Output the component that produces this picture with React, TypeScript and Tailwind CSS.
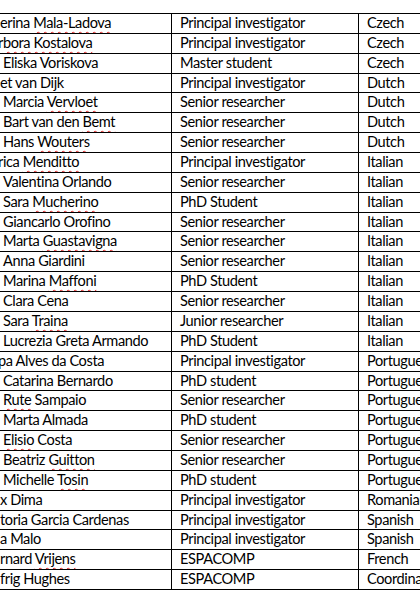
const rows: [string, string, string, string?][] = [
  ["erina |Mala-Ladova|", "Principal investigator", "Czech", "cut"],
  ["r|bora Kostalova|", "Principal investigator", "Czech", "cutr"],
  ["Eliska Voriskova", "Master student", "Czech"],
  ["et van Dijk", "Principal investigator", "Dutch", "cut"],
  ["Marcia |Vervloet|", "Senior researcher", "Dutch"],
  ["Bart van den |Bemt|", "Senior researcher", "Dutch"],
  ["Hans |Wouters|", "Senior researcher", "Dutch"],
  ["rica |Menditto|", "Principal investigator", "Italian", "cutr"],
  ["Valentina Orlando", "Senior researcher", "Italian"],
  ["Sara |Mucherino|", "PhD Student", "Italian"],
  ["Giancarlo Orofino", "Senior researcher", "Italian"],
  ["Marta |Guastavigna|", "Senior researcher", "Italian"],
  ["Anna Giardini", "Senior researcher", "Italian"],
  ["Marina |Maffoni|", "PhD Student", "Italian"],
  ["Clara Cena", "Senior researcher", "Italian"],
  ["Sara |Traina|", "Junior researcher", "Italian"],
  ["Lucrezia Greta Armando", "PhD Student", "Italian"],
  ["pa Alves da Costa", "Principal investigator", "Portuguese", "cutr"],
  ["Catarina Bernardo", "PhD student", "Portuguese"],
  ["|Rute| Sampaio", "Senior researcher", "Portuguese"],
  ["Marta Almada", "PhD student", "Portuguese"],
  ["|Elisio| Costa", "Senior researcher", "Portuguese"],
  ["Beatriz |Guitton|", "Senior researcher", "Portuguese"],
  ["Michelle |Tosin|", "PhD student", "Portuguese"],
  ["x Dima", "Principal investigator", "Romanian", "cut"],
  ["toria Garcia Cardenas", "Principal investigator", "Spanish", "cut"],
  ["a Malo", "Principal investigator", "Spanish", "cut"],
  ["rnard |Vrijens|", "ESPACOMP", "French", "cut"],
  ["frig Hughes", "ESPACOMP", "Coordinator", "cut"],
];

function Name({ text }: { text: string }) {
  // segments between pipes get the spell-check squiggle
  const parts = text.split("|");
  return (
    <>
      {parts.map((p, i) =>
        i % 2 === 1 ? (
          <span
            key={i}
            className="underline decoration-wavy decoration-[#d22] decoration-1 underline-offset-[3px]"
          >
            {p}
          </span>
        ) : (
          <span key={i}>{p}</span>
        )
      )}
    </>
  );
}

export default function App() {
  const step = 576 / 29;
  return (
    <div className="w-[420px] h-[608px] overflow-hidden bg-white pt-[13px] font-['Lato','Liberation_Sans',sans-serif] text-[14.6px] tracking-[-0.4px] text-black">
      <div className="w-[560px] border-t border-black">
        {rows.map(([name, role, country, cut], i) => {
          const h = Math.round((i + 1) * step) - Math.round(i * step);
          return (
            <div
              key={i}
              className={`flex border-b border-black leading-none ${h === 19 ? "h-[19px]" : "h-[20px]"}`}
            >
              <div
                className={`w-[172px] shrink-0 border-r border-black flex items-center whitespace-nowrap overflow-hidden ${
                  cut === "cutr" ? "pl-0 -indent-[2px]" : cut === "cut" ? "pl-0" : "pl-[3px]"
                }`}
              >
                <span className="block">
                  <Name text={name} />
                </span>
              </div>
              <div className="w-[187px] shrink-0 border-r border-black flex items-center pl-[8px] whitespace-nowrap">
                {role}
              </div>
              <div className="flex-1 flex items-center pl-[8px] whitespace-nowrap">{country}</div>
            </div>
          );
        })}
      </div>
    </div>
  );
}
